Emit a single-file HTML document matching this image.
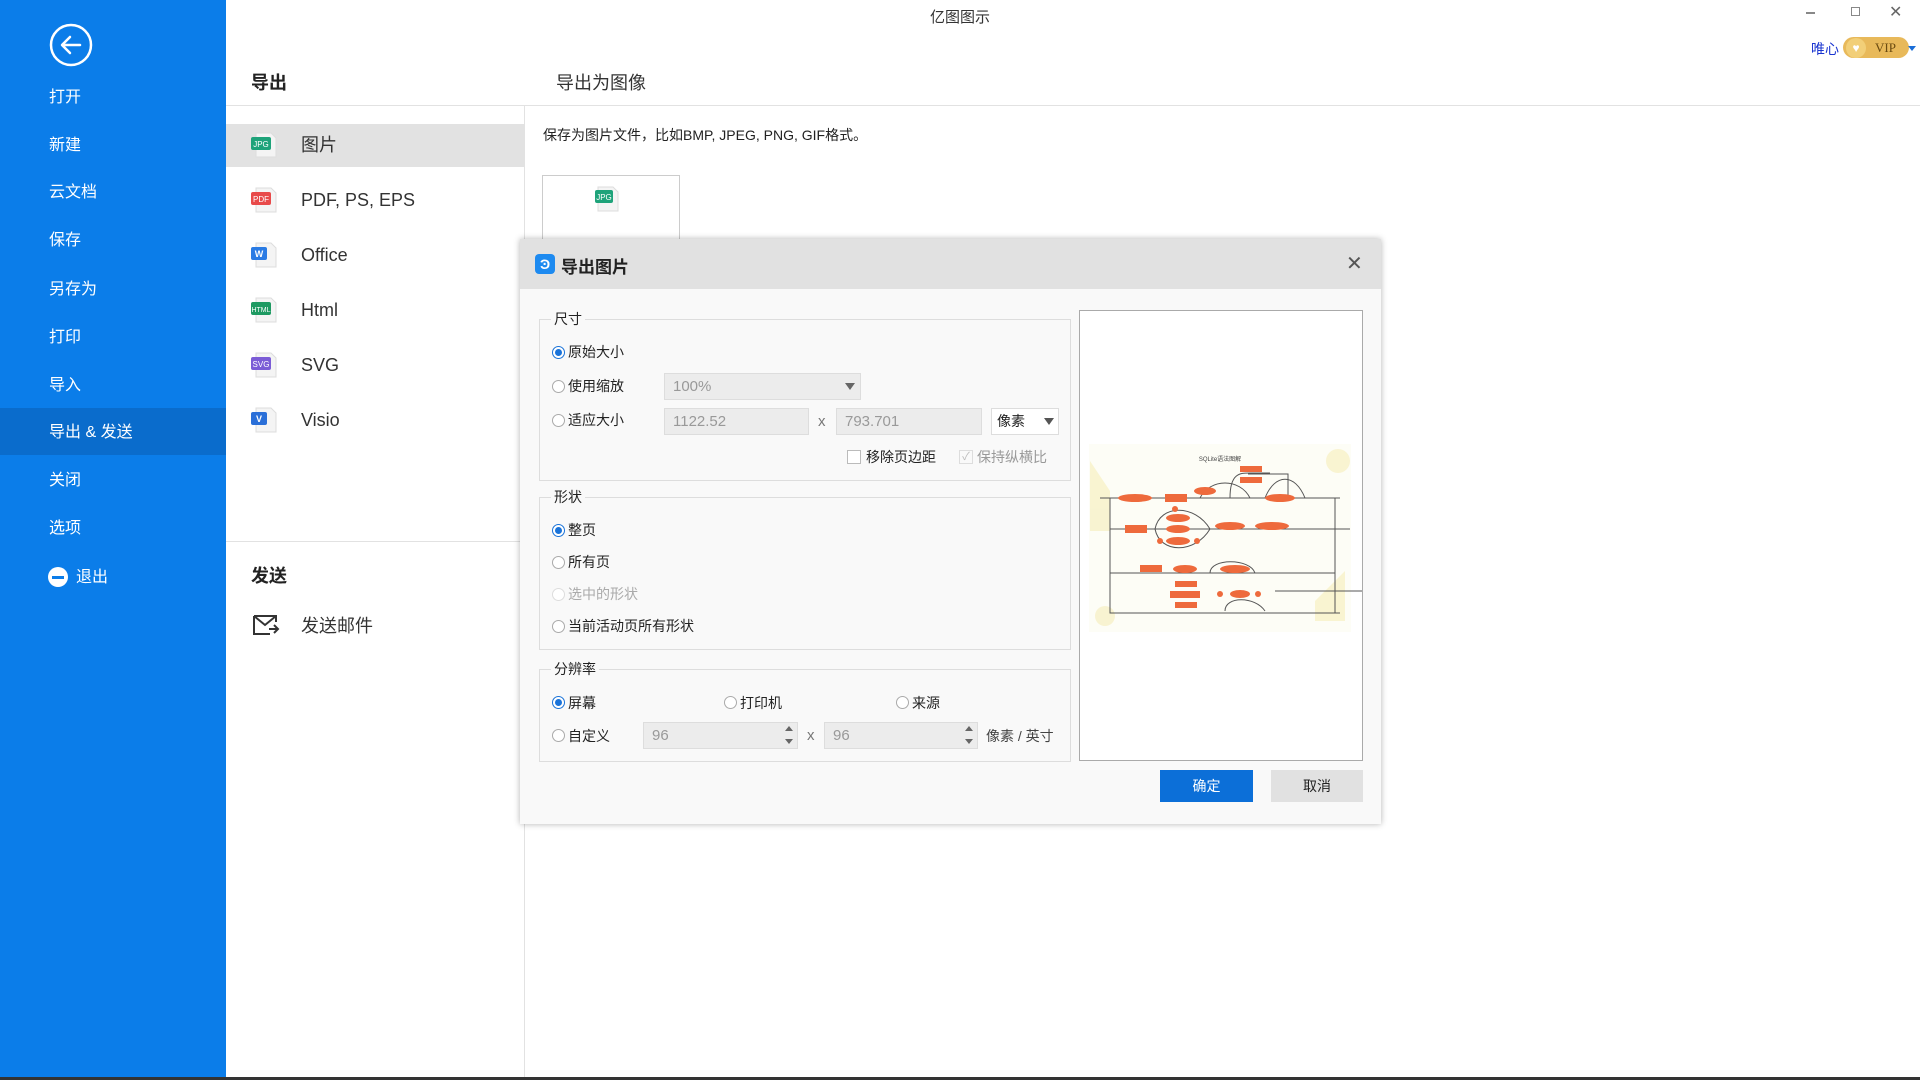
<!DOCTYPE html>
<html><head><meta charset="utf-8"><style>
*{margin:0;padding:0;box-sizing:border-box}
body{width:1920px;height:1080px;position:relative;overflow:hidden;background:#fff;font-family:"Liberation Sans","Noto Sans CJK SC",sans-serif;color:#222}
.a{position:absolute;white-space:nowrap}
#side{left:0;top:0;width:226px;height:1080px;background:#0b7de9}
.mi{position:absolute;left:49px;color:#fff;font-size:16px;line-height:20px}
.li{position:absolute;left:301px;font-size:18px;color:#333;line-height:22px}
.ic{position:absolute;left:251px;width:28px;height:28px}
.rad{position:absolute;width:13px;height:13px;border-radius:50%;border:1px solid #aaa;background:#fff}
.rad.on{border-color:#1a73d9}
.rad.on:after{content:"";position:absolute;left:2px;top:2px;width:7px;height:7px;border-radius:50%;background:#1a73d9}
.t{position:absolute;font-size:14px;color:#222;line-height:18px}
.fs{position:absolute;border:1px solid #ddd}
.lg{position:absolute;font-size:14px;background:#f9f9f9;padding:0 3px;line-height:16px}
.inp{position:absolute;background:#ececec;border:1px solid #ddd;color:#999;font-size:15px;padding-left:8px}
</style></head><body>
<div id="side" class="a">
 <svg class="a" style="left:49px;top:23px" width="44" height="44" viewBox="0 0 44 44"><circle cx="22" cy="22" r="20" fill="none" stroke="#fff" stroke-width="2.5"/><path d="M31 22H14M21 14l-8 8 8 8" fill="none" stroke="#fff" stroke-width="2.5" stroke-linecap="round" stroke-linejoin="round"/></svg>
 <div class="mi" style="top:88px">打开</div>
 <div class="mi" style="top:136px">新建</div>
 <div class="mi" style="top:183px">云文档</div>
 <div class="mi" style="top:231px">保存</div>
 <div class="mi" style="top:280px">另存为</div>
 <div class="mi" style="top:328px">打印</div>
 <div class="mi" style="top:376px">导入</div>
 <div class="a" style="left:0;top:408px;width:226px;height:47px;background:#0a6ccc"></div>
 <div class="mi" style="top:423px">导出 &amp; 发送</div>
 <div class="mi" style="top:471px">关闭</div>
 <div class="mi" style="top:519px">选项</div>
 <div class="a" style="left:48px;top:567px;width:20px;height:20px;border-radius:50%;background:#fff"><div style="position:absolute;left:4px;top:9px;width:12px;height:3px;background:#0b7de9"></div></div>
 <div class="mi" style="top:568px;left:76px">退出</div>
</div>
<div class="a" style="left:960px;top:6px;transform:translateX(-50%);font-size:15px;color:#333">亿图图示</div>
<div class="a" style="left:1806px;top:12px;width:9px;height:1.5px;background:#888"></div>
<div class="a" style="left:1851px;top:7px;width:9px;height:9px;border:1.5px solid #888"></div>
<div class="a" style="left:1889px;top:2px;font-size:16px;color:#666">✕</div>
<div class="a" style="left:1811px;top:39px;font-size:14px;color:#1a35d0">唯心</div>
<div class="a" style="left:1843px;top:37px;width:66px;height:21px;border-radius:11px;background:#e8b95a;color:#6a4a10;font-size:13px;font-family:'Liberation Serif',serif;padding-left:32px;line-height:21px">VIP</div>
<div class="a" style="left:1846px;top:38px;width:20px;height:20px;border-radius:50%;background:#f2cf78;color:#fff;font-size:12px;text-align:center;line-height:20px">♥</div>
<div class="a" style="left:1908px;top:46px;border:4px solid transparent;border-top:5px solid #1a6ed8"></div>

<div class="a" style="left:251px;top:69px;font-size:18px;font-weight:bold">导出</div>
<div class="a" style="left:556px;top:69px;font-size:18px;color:#333">导出为图像</div>
<div class="a" style="left:226px;top:105px;width:1694px;height:1px;background:#e2e2e2"></div>
<div class="a" style="left:524px;top:105px;width:1px;height:975px;background:#e2e2e2"></div>
<div class="a" style="left:226px;top:124px;width:298px;height:43px;background:#e2e2e2"></div>
<svg class="ic" style="top:131px" viewBox="0 0 28 28"><path d="M5 2h15l5 5v19H5z" fill="#f4f4f4" stroke="#ddd"/><rect x="0" y="6" width="20" height="13" rx="2" fill="#1ea37a"/><text x="10" y="16" font-size="8" fill="#fff" text-anchor="middle" font-family="Liberation Sans">JPG</text></svg>
<div class="li" style="top:134px">图片</div>
<svg class="ic" style="top:186px" viewBox="0 0 28 28"><path d="M5 2h15l5 5v19H5z" fill="#f4f4f4" stroke="#ddd"/><rect x="0" y="6" width="20" height="13" rx="2" fill="#e84a4a"/><text x="10" y="16" font-size="8" fill="#fff" text-anchor="middle" font-family="Liberation Sans">PDF</text></svg>
<div class="li" style="top:189px">PDF, PS, EPS</div>
<svg class="ic" style="top:241px" viewBox="0 0 28 28"><path d="M5 2h15l5 5v19H5z" fill="#f4f4f4" stroke="#ddd"/><rect x="0" y="6" width="16" height="13" rx="2" fill="#2a7be4"/><text x="8" y="16" font-size="9" fill="#fff" text-anchor="middle" font-family="Liberation Sans" font-weight="bold">W</text></svg>
<div class="li" style="top:244px">Office</div>
<svg class="ic" style="top:296px" viewBox="0 0 28 28"><path d="M5 2h15l5 5v19H5z" fill="#f4f4f4" stroke="#ddd"/><rect x="0" y="6" width="20" height="13" rx="2" fill="#1e9a62"/><text x="10" y="16" font-size="7" fill="#fff" text-anchor="middle" font-family="Liberation Sans">HTML</text></svg>
<div class="li" style="top:299px">Html</div>
<svg class="ic" style="top:351px" viewBox="0 0 28 28"><path d="M5 2h15l5 5v19H5z" fill="#f4f4f4" stroke="#ddd"/><rect x="0" y="6" width="20" height="13" rx="2" fill="#7b5cd6"/><text x="10" y="16" font-size="8" fill="#fff" text-anchor="middle" font-family="Liberation Sans">SVG</text></svg>
<div class="li" style="top:354px">SVG</div>
<svg class="ic" style="top:406px" viewBox="0 0 28 28"><path d="M5 2h15l5 5v19H5z" fill="#f4f4f4" stroke="#ddd"/><rect x="0" y="6" width="16" height="13" rx="2" fill="#2a6fd8"/><text x="8" y="16" font-size="9" fill="#fff" text-anchor="middle" font-family="Liberation Sans" font-weight="bold">V</text></svg>
<div class="li" style="top:409px">Visio</div>
<div class="a" style="left:226px;top:541px;width:298px;height:1px;background:#e2e2e2"></div>
<div class="a" style="left:251px;top:562px;font-size:18px;font-weight:bold">发送</div>
<svg class="a" style="left:252px;top:613px" width="28" height="24" viewBox="0 0 28 24"><path d="M2 3h22v6M2 3v18h16M2 3l11 9 11-9" fill="none" stroke="#333" stroke-width="2"/><path d="M17 16h9M22 12l4 4-4 4" fill="none" stroke="#333" stroke-width="2"/></svg>
<div class="li" style="top:615px">发送邮件</div>

<div class="a" style="left:543px;top:125px;font-size:14px;color:#222">保存为图片文件，比如BMP, JPEG, PNG, GIF格式。</div>
<div class="a" style="left:542px;top:175px;width:138px;height:70px;border:1px solid #ccc;background:#fff"></div>
<svg class="a" style="left:593px;top:184px" width="28" height="30" viewBox="0 0 28 28"><path d="M5 2h15l5 5v19H5z" fill="#f4f4f4" stroke="#ddd"/><rect x="2" y="5" width="18" height="13" rx="2" fill="#1ea37a"/><text x="11" y="15" font-size="8" fill="#fff" text-anchor="middle" font-family="Liberation Sans">JPG</text></svg>

<div class="a" style="left:520px;top:239px;width:861px;height:585px;background:#f9f9f9;box-shadow:0 0 6px rgba(0,0,0,.3)">
 <div class="a" style="left:0;top:0;width:861px;height:50px;background:#e1e1e1"></div>
 <div class="a" style="left:15px;top:15px;width:20px;height:20px;border-radius:4px;background:#1d8af0;color:#fff;font-size:14px;font-weight:bold;text-align:center;line-height:20px">Ͽ</div>
 <div class="a" style="left:41px;top:14px;font-size:17px;font-weight:bold">导出图片</div>
 <div class="a" style="left:826px;top:12px;font-size:20px;color:#555">✕</div>
</div>
<div class="fs" style="left:539px;top:319px;width:532px;height:162px"></div>
<div class="lg" style="left:551px;top:311px">尺寸</div>
<div class="rad on" style="left:552px;top:346px"></div><div class="t" style="left:568px;top:343px">原始大小</div>
<div class="rad" style="left:552px;top:380px"></div><div class="t" style="left:568px;top:377px">使用缩放</div>
<div class="rad" style="left:552px;top:414px"></div><div class="t" style="left:568px;top:411px">适应大小</div>
<div class="inp" style="left:664px;top:373px;width:197px;height:27px;line-height:25px">100%</div>
<div class="a" style="left:845px;top:383px;border:5px solid transparent;border-top:7px solid #666"></div>
<div class="inp" style="left:664px;top:408px;width:145px;height:27px;line-height:25px">1122.52</div>
<div class="a" style="left:818px;top:413px;font-size:15px;color:#777">x</div>
<div class="inp" style="left:836px;top:408px;width:146px;height:27px;line-height:25px">793.701</div>
<div class="a" style="left:991px;top:408px;width:68px;height:27px;background:#fff;border:1px solid #ddd;font-size:14px;padding-left:5px;line-height:25px">像素</div>
<div class="a" style="left:1044px;top:418px;border:5px solid transparent;border-top:7px solid #555"></div>
<div class="a" style="left:847px;top:450px;width:14px;height:14px;border:1px solid #bbb;background:#fff"></div>
<div class="t" style="left:866px;top:448px">移除页边距</div>
<div class="a" style="left:959px;top:450px;width:14px;height:14px;border:1px solid #ddd;color:#bbb;font-size:11px;line-height:12px;text-align:center">✓</div>
<div class="t" style="left:977px;top:448px;color:#999">保持纵横比</div>

<div class="fs" style="left:539px;top:497px;width:532px;height:153px"></div>
<div class="lg" style="left:551px;top:489px">形状</div>
<div class="rad on" style="left:552px;top:524px"></div><div class="t" style="left:568px;top:521px">整页</div>
<div class="rad" style="left:552px;top:556px"></div><div class="t" style="left:568px;top:553px">所有页</div>
<div class="rad" style="left:552px;top:588px;border-color:#ddd"></div><div class="t" style="left:568px;top:585px;color:#aaa">选中的形状</div>
<div class="rad" style="left:552px;top:620px"></div><div class="t" style="left:568px;top:617px">当前活动页所有形状</div>

<div class="fs" style="left:539px;top:669px;width:532px;height:93px"></div>
<div class="lg" style="left:551px;top:661px">分辨率</div>
<div class="rad on" style="left:552px;top:696px"></div><div class="t" style="left:568px;top:694px">屏幕</div>
<div class="rad" style="left:724px;top:696px"></div><div class="t" style="left:740px;top:694px">打印机</div>
<div class="rad" style="left:896px;top:696px"></div><div class="t" style="left:912px;top:694px">来源</div>
<div class="rad" style="left:552px;top:729px"></div><div class="t" style="left:568px;top:727px">自定义</div>
<div class="inp" style="left:643px;top:722px;width:155px;height:27px;line-height:25px">96</div>
<div class="a" style="left:785px;top:726px;border:4px solid transparent;border-bottom:5px solid #666;border-top:0"></div>
<div class="a" style="left:785px;top:739px;border:4px solid transparent;border-top:5px solid #666;border-bottom:0"></div>
<div class="a" style="left:807px;top:727px;font-size:15px;color:#777">x</div>
<div class="inp" style="left:824px;top:722px;width:154px;height:27px;line-height:25px">96</div>
<div class="a" style="left:965px;top:726px;border:4px solid transparent;border-bottom:5px solid #666;border-top:0"></div>
<div class="a" style="left:965px;top:739px;border:4px solid transparent;border-top:5px solid #666;border-bottom:0"></div>
<div class="t" style="left:986px;top:727px;color:#444">像素 / 英寸</div>

<div class="a" style="left:1079px;top:310px;width:284px;height:451px;border:1px solid #aaa;background:#fff">
<svg width="282" height="449" viewBox="0 0 282 449">
<rect x="9" y="133" width="262" height="188" fill="#fdfdf6"/>
<g fill="#f8f1c8" opacity=".8"><path d="M10 150l20 30v40H10z"/><circle cx="258" cy="150" r="12"/><path d="M235 290l30-30v50h-30z"/><circle cx="25" cy="305" r="10"/></g>
<text x="140" y="150" font-size="6" text-anchor="middle" fill="#444" font-family="Liberation Sans">SQLite语法图解</text>
<g fill="none" stroke="#555" stroke-width="1">
<path d="M20 187h240M30 187v115h230M30 218h225M30 262h225M105 186v-2M120 187c10-20 40-20 50 0M150 187c0-25 10-25 20-25h20M185 187c10-25 30-25 40 0M75 218c5-25 40-25 55 0M75 218c5 25 40 25 55 0M130 218h140M130 262c0-15 40-15 45 0M145 300c0-15 30-15 40 0M195 280h100"/>
<path d="M168 163h40v22M255 187v115"/>
</g>
<g fill="#ee6a3c">
<ellipse cx="55" cy="187" rx="17" ry="4"/><rect x="85" y="183" width="22" height="8"/><ellipse cx="125" cy="180" rx="11" ry="4"/><rect x="160" y="155" width="22" height="6"/><rect x="160" y="166" width="22" height="6"/><ellipse cx="200" cy="187" rx="15" ry="4"/>
<rect x="45" y="214" width="22" height="8"/><ellipse cx="98" cy="207" rx="12" ry="4"/><ellipse cx="98" cy="218" rx="12" ry="4"/><ellipse cx="98" cy="230" rx="12" ry="4"/><circle cx="95" cy="198" r="3"/><circle cx="80" cy="230" r="3"/><circle cx="117" cy="230" r="3"/>
<ellipse cx="150" cy="215" rx="15" ry="4"/><ellipse cx="192" cy="215" rx="17" ry="4"/>
<rect x="60" y="254" width="22" height="7"/><ellipse cx="105" cy="258" rx="12" ry="4"/><ellipse cx="155" cy="258" rx="15" ry="4"/>
<rect x="95" y="270" width="22" height="6"/><rect x="90" y="280" width="30" height="7"/><rect x="95" y="291" width="22" height="6"/><circle cx="140" cy="283" r="3"/><ellipse cx="160" cy="283" rx="10" ry="4"/><circle cx="178" cy="283" r="3"/>
</g>
</svg></div>
<div class="a" style="left:1160px;top:770px;width:93px;height:32px;background:#0c6fd8;color:#fff;font-size:14px;text-align:center;line-height:32px">确定</div>
<div class="a" style="left:1271px;top:770px;width:92px;height:32px;background:#e1e1e1;color:#222;font-size:14px;text-align:center;line-height:32px">取消</div>
<div class="a" style="left:0;top:1077px;width:1920px;height:3px;background:#333"></div>
</body></html>
